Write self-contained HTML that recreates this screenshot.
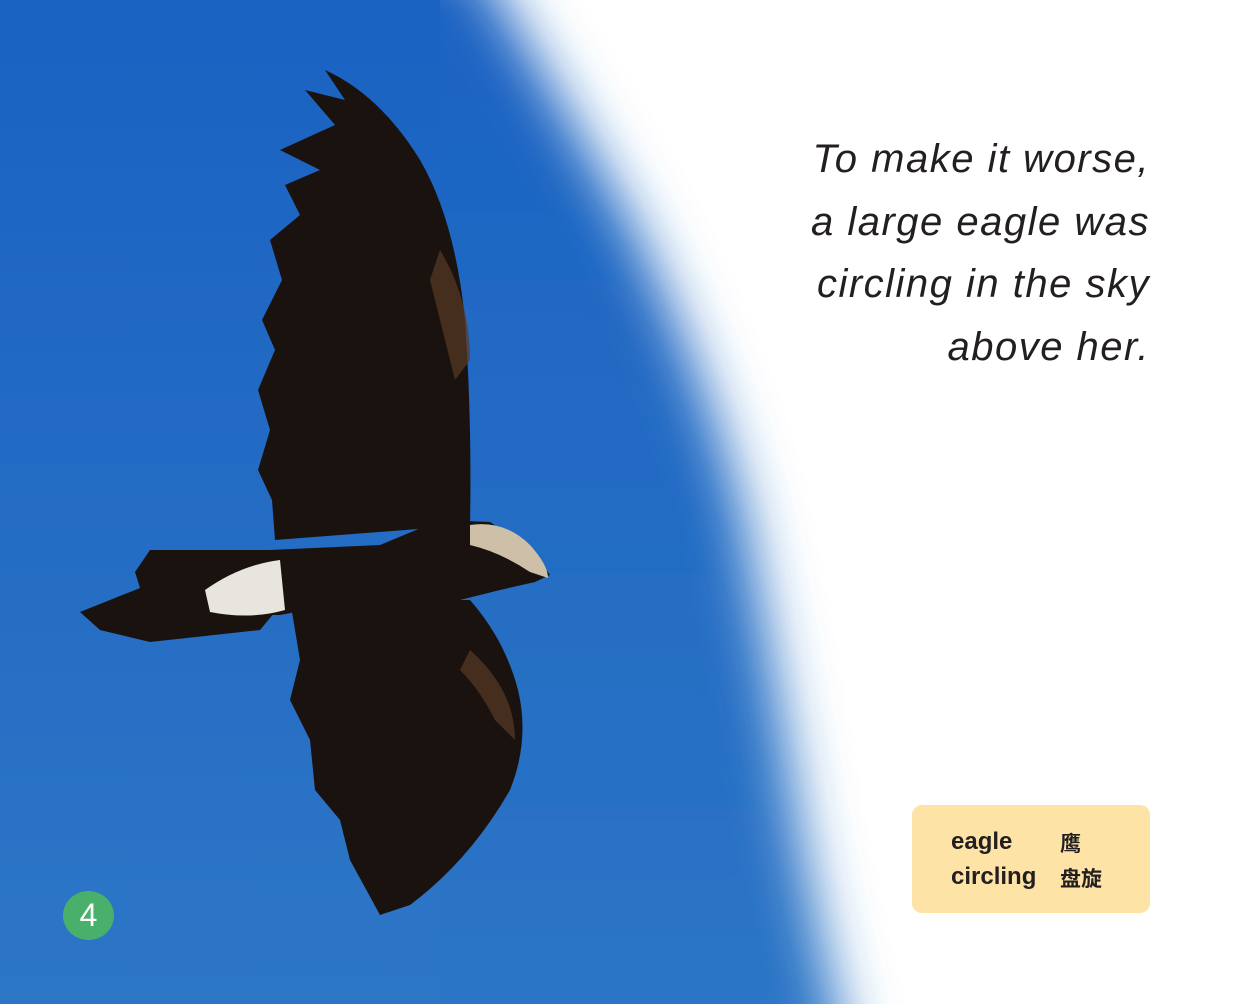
<!DOCTYPE html>
<html><head><meta charset="utf-8"><style>
html,body{margin:0;padding:0;background:#fff;width:1241px;height:1004px;overflow:hidden}
#p{position:relative;width:1241px;height:1004px;overflow:hidden;background:#fff}
svg{position:absolute;left:0;top:0}
.t{position:absolute;right:91px;top:128px;text-align:right;font-family:"Liberation Sans",sans-serif;font-style:italic;font-size:40px;line-height:62.5px;letter-spacing:1.5px;color:#231f20}
.g{position:absolute;left:912px;top:805px;width:238px;height:108px;background:#fde3a6;border-radius:10px;font-family:"Liberation Sans","Noto Sans CJK SC",sans-serif;font-size:24px;font-weight:bold;color:#231f20}
.g div{position:absolute;left:39px}
.n{position:absolute;left:63px;top:891px;width:51px;height:49px;border-radius:50%;background:#48b06a;color:#fff;font-family:"Liberation Sans",sans-serif;font-size:32px;text-align:center;line-height:49px}
</style></head><body><div id="p">
<svg width="1241" height="1004" viewBox="0 0 1241 1004">
<defs>
<linearGradient id="b" x1="0" y1="0" x2="0" y2="1"><stop offset="0" stop-color="#1a62c2"/><stop offset="1" stop-color="#2d76c6"/></linearGradient>
<filter id="f" x="-20%" y="-20%" width="140%" height="140%"><feGaussianBlur stdDeviation="28"/></filter>
</defs>
<path d="M-50,-50 L470,-50 Q550,80 630,220 Q710,380 745,520 Q780,700 800,830 Q820,940 850,1060 L-50,1060Z" fill="url(#b)" filter="url(#f)"/>
<rect x="0" y="0" width="440" height="1004" fill="url(#b)"/>
<g fill="#1a120e">
<path d="M470,525 Q472,420 465,320 Q455,220 420,160 Q380,95 325,70 L345,100 L305,90 L335,125 L280,150 L320,170 L285,185 L300,215 L270,240 L282,280 L262,320 L275,350 L258,390 L270,430 L258,470 L272,500 L275,540 Z"/>
<path d="M290,600 L300,660 L290,700 L310,740 L315,790 L340,820 L350,860 L380,915 L410,905 Q470,860 510,790 Q530,740 518,690 Q505,640 470,600 Z"/>
<path d="M205,575 L270,550 L380,545 L440,520 L490,522 L530,548 L550,575 L535,582 L500,590 L440,605 L360,600 L280,615 L210,615Z"/>
<path d="M80,612 L140,588 L135,572 L150,550 L270,550 L285,600 L260,630 L150,642 L100,630Z"/>
</g>
<g fill="#5a3a25" opacity="0.7">
<path d="M440,250 Q470,300 470,360 L455,380 Q440,320 430,280Z"/>
<path d="M470,650 Q515,690 515,740 L495,720 Q480,690 460,670Z"/>
</g>
<path d="M205,590 Q240,565 280,560 L285,610 Q250,620 210,612Z" fill="#e8e4de"/>
<path d="M470,525 Q505,520 530,545 Q548,565 548,578 L530,572 Q500,552 470,545Z" fill="#cdbfa8"/>
</svg>
<div class="t">To make it worse,<br>a large eagle was<br>circling in the sky<br>above her.</div>
<div class="g"><div style="top:23px">eagle</div><div style="top:58px">circling</div><div style="left:148px;top:23px;font-size:21px">鹰</div><div style="left:148px;top:58px;font-size:21px">盘旋</div></div>
<div class="n">4</div>
</div></body></html>
